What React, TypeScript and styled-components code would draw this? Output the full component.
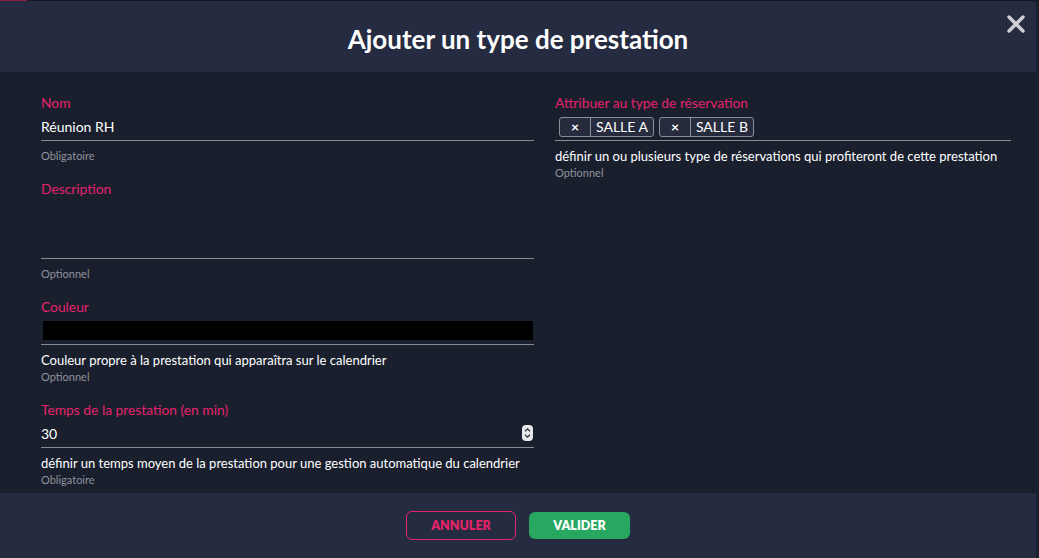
import React from 'react';
import styled, { createGlobalStyle } from 'styled-components';

const GlobalStyle = createGlobalStyle`
  html, body {
    margin: 0;
    padding: 0;
    background: #1c2130;
    font-family: Lato, "Noto Sans", sans-serif;
  }
  * { box-sizing: border-box; }
`;

const pink = '#e5236b';

export default function App() {
  return (
    <>
      <GlobalStyle />
      <Page>
        <TopStrip>
          <TopAccent />
        </TopStrip>
        <Modal>
          <Header>
            <Title>Ajouter un type de prestation</Title>
            <CloseButton aria-label="fermer">
              <svg width="18" height="18" viewBox="0 0 18 18">
                <path d="M2 2 L16 16 M16 2 L2 16" stroke="#cfd0d4" strokeWidth="3.4" strokeLinecap="round" />
              </svg>
            </CloseButton>
          </Header>
          <Body>
            <Column>
              <Field>
                <Label>Nom</Label>
                <InputRow>
                  <Value>Réunion RH</Value>
                </InputRow>
                <Hint>Obligatoire</Hint>
              </Field>
              <Field>
                <Label>Description</Label>
                <InputRow $tall>
                  <Value />
                </InputRow>
                <Hint>Optionnel</Hint>
              </Field>
              <Field>
                <Label>Couleur</Label>
                <InputRow>
                  <ColorSwatch />
                </InputRow>
                <Helper>Couleur propre à la prestation qui apparaîtra sur le calendrier</Helper>
                <Hint>Optionnel</Hint>
              </Field>
              <Field>
                <Label>Temps de la prestation (en min)</Label>
                <InputRow>
                  <Value>30</Value>
                  <Spinner>
                    <svg width="9" height="14" viewBox="0 0 9 14">
                      <path d="M2 5.2 L4.5 2.8 L7 5.2 M2 8.8 L4.5 11.2 L7 8.8" stroke="#2a2f3c" strokeWidth="1.3" fill="none" />
                    </svg>
                  </Spinner>
                </InputRow>
                <Helper>définir un temps moyen de la prestation pour une gestion automatique du calendrier</Helper>
                <Hint>Obligatoire</Hint>
              </Field>
            </Column>
            <Column>
              <Field>
                <Label>Attribuer au type de réservation</Label>
                <InputRow $chips>
                  {['SALLE A', 'SALLE B'].map((s) => (
                    <Chip key={s}>
                      <ChipRemove>×</ChipRemove>
                      <ChipText>{s}</ChipText>
                    </Chip>
                  ))}
                </InputRow>
                <Helper>définir un ou plusieurs type de réservations qui profiteront de cette prestation</Helper>
                <Hint>Optionnel</Hint>
              </Field>
            </Column>
          </Body>
          <Footer>
            <Button $variant="outline">ANNULER</Button>
            <Button $variant="primary">VALIDER</Button>
          </Footer>
        </Modal>
      </Page>
    </>
  );
}

const Page = styled.div`
  width: 1039px;
  height: 558px;
  display: flex;
  flex-direction: column;
  background: #1c2130;
  overflow: hidden;
`;

const TopStrip = styled.div`
  height: 1px;
  flex-shrink: 0;
  background: #151824;
  display: flex;
`;

const TopAccent = styled.div`
  width: 27px;
  background: #8b1a45;
`;

const Modal = styled.div`
  flex: 1;
  width: 1036px;
  display: flex;
  flex-direction: column;
  border-top-right-radius: 5px;
  overflow: hidden;
`;

const Header = styled.div`
  height: 71px;
  flex-shrink: 0;
  background: #252b40;
  display: flex;
  align-items: center;
  justify-content: center;
  position: relative;
`;

const Title = styled.h1`
  margin: 5px 0 0;
  color: #ffffff;
  font-size: 26px;
  font-weight: 700;
`;

const CloseButton = styled.button`
  position: absolute;
  top: 14px;
  right: 11px;
  background: none;
  border: none;
  padding: 0;
  display: flex;
  cursor: pointer;
`;

const Body = styled.div`
  flex: 1;
  background: #1a1f2e;
  display: grid;
  grid-template-columns: 493px 456px;
  column-gap: 21px;
  padding: 22px 0 0 41px;
`;

const Column = styled.div`
  display: flex;
  flex-direction: column;
  gap: 17px;
`;

const Field = styled.div`
  display: flex;
  flex-direction: column;
`;

const Label = styled.label`
  color: ${pink};
  font-size: 13.8px;
  line-height: 18px;
`;

const InputRow = styled.div<{ $tall?: boolean; $chips?: boolean }>`
  display: flex;
  align-items: ${(p) => (p.$chips ? 'center' : 'flex-end')};
  gap: 5px;
  height: ${(p) => (p.$tall ? '61px' : '29px')};
  padding: ${(p) => (p.$chips ? '4px 0 3px 4px' : '0 0 4px')};
  border-bottom: 1px solid #8a8b90;
`;

const Value = styled.span`
  flex: 1;
  color: #ffffff;
  font-size: 14px;
  line-height: 19px;
`;

const ColorSwatch = styled.div`
  flex: 1;
  height: 19px;
  margin: 0 1px 0 2px;
  background: #000000;
  border-radius: 1px;
`;

const Spinner = styled.div`
  width: 11px;
  height: 16px;
  margin: 0 1px 2px 0;
  background: #e8e8ea;
  border-radius: 4px;
  display: flex;
  align-items: center;
  justify-content: center;
`;

const Chip = styled.div`
  display: flex;
  height: 20px;
  border: 1px solid #8b8e97;
  border-radius: 3px;
  background: #262b3e;
  color: #ffffff;
`;

const ChipRemove = styled.span`
  width: 31px;
  display: flex;
  align-items: center;
  justify-content: center;
  font-size: 14px;
  font-weight: 700;
  border-right: 1px solid #8b8e97;
`;

const ChipText = styled.span`
  padding: 0 5px;
  font-size: 14px;
  line-height: 18px;
`;

const Helper = styled.div`
  margin-top: 7px;
  color: #ffffff;
  font-size: 13px;
  line-height: 16px;
`;

const Hint = styled.div`
  margin-top: 8px;
  color: #8e929c;
  font-size: 11px;
  line-height: 14px;

  ${Helper} + & {
    margin-top: 2px;
  }
`;

const Footer = styled.div`
  height: 65px;
  flex-shrink: 0;
  background: #252b40;
  display: flex;
  align-items: center;
  justify-content: center;
  gap: 13px;
`;

const Button = styled.button<{ $variant: 'outline' | 'primary' }>`
  height: ${(p) => (p.$variant === 'outline' ? '29px' : '27px')};
  width: ${(p) => (p.$variant === 'outline' ? '110px' : '101px')};
  border-radius: 6px;
  font-family: Lato, "Noto Sans", sans-serif;
  font-size: 12.5px;
  font-weight: 800;
  cursor: pointer;
  border: ${(p) => (p.$variant === 'outline' ? `1px solid ${pink}` : 'none')};
  background: ${(p) => (p.$variant === 'outline' ? 'transparent' : '#27a760')};
  color: ${(p) => (p.$variant === 'outline' ? pink : '#ffffff')};
`;
